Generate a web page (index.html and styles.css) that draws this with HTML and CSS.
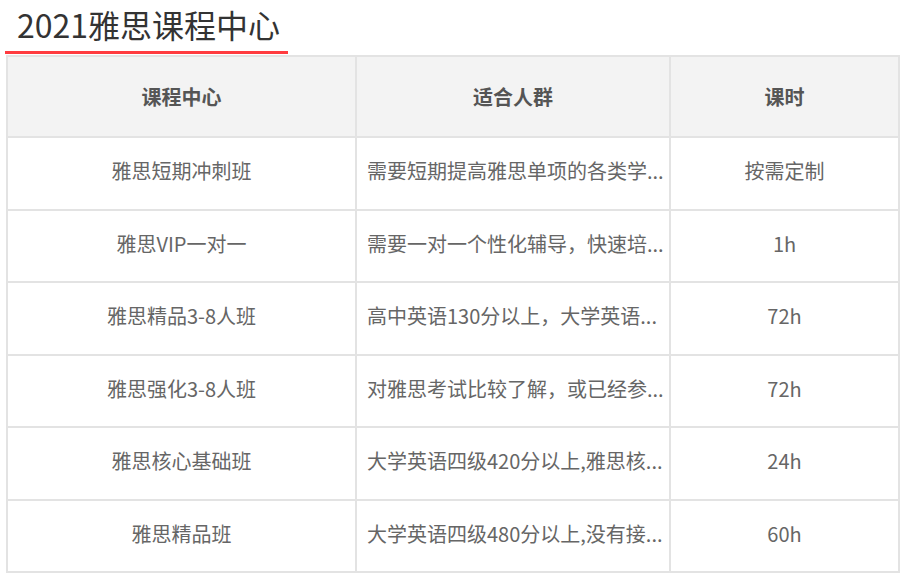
FILE: index.html
```html
<!DOCTYPE html>
<html lang="zh">
<head>
<meta charset="utf-8">
<title>2021雅思课程中心</title>
<link rel="stylesheet" href="styles.css">
</head>
<body>
<div class="page">
  <div class="title-wrap">
    <h2 class="title">2021雅思课程中心</h2>
  </div>
  <table class="course-table">
    <colgroup>
      <col class="c1">
      <col class="c2">
      <col class="c3">
    </colgroup>
    <thead>
      <tr>
        <th>课程中心</th>
        <th>适合人群</th>
        <th>课时</th>
      </tr>
    </thead>
    <tbody>
      <tr>
        <td>雅思短期冲刺班</td>
        <td class="clip">需要短期提高雅思单项的各类学...</td>
        <td>按需定制</td>
      </tr>
      <tr>
        <td>雅思VIP一对一</td>
        <td class="clip">需要一对一个性化辅导，快速培...</td>
        <td>1h</td>
      </tr>
      <tr>
        <td>雅思精品3-8人班</td>
        <td class="clip">高中英语130分以上，大学英语...</td>
        <td>72h</td>
      </tr>
      <tr>
        <td>雅思强化3-8人班</td>
        <td class="clip">对雅思考试比较了解，或已经参...</td>
        <td>72h</td>
      </tr>
      <tr>
        <td>雅思核心基础班</td>
        <td class="clip">大学英语四级420分以上,雅思核...</td>
        <td>24h</td>
      </tr>
      <tr>
        <td>雅思精品班</td>
        <td class="clip">大学英语四级480分以上,没有接...</td>
        <td>60h</td>
      </tr>
    </tbody>
  </table>
</div>
</body>
</html>
```

FILE: styles.css
```css
html, body {
  margin: 0;
  padding: 0;
  background: #ffffff;
}

body {
  font-family: "Noto Sans CJK SC", "Noto Sans", sans-serif;
  color: #666666;
}

.page {
  width: 900px;
  padding-top: 4px;
}

.title-wrap {
  margin-left: 5px;
  width: 283px;
  border-bottom: 3px solid #ff3b3f;
}

.title {
  margin: 0;
  padding-left: 12px;
  height: 47px;
  font-size: 32px;
  line-height: 40px;
  font-weight: normal;
  color: #333333;
}

.course-table {
  margin-top: 1px;
  margin-left: 6px;
  width: 892px;
  border-collapse: collapse;
  table-layout: fixed;
}

.c1 { width: 349px; }
.c2 { width: 314px; }
.c3 { width: 229px; }

.course-table th,
.course-table td {
  border: 2px solid #e3e3e3;
  text-align: center;
  font-size: 20px;
  line-height: 28px;
  padding: 0 8px;
  white-space: nowrap;
}

.course-table th {
  height: 79px;
  background: #f3f3f3;
  font-weight: bold;
  color: #555555;
}

.course-table td {
  height: 66.5px;
  padding-bottom: 4px;
  color: #666666;
}

.course-table td.clip {
  text-align: left;
  padding-left: 10px;
}
```
